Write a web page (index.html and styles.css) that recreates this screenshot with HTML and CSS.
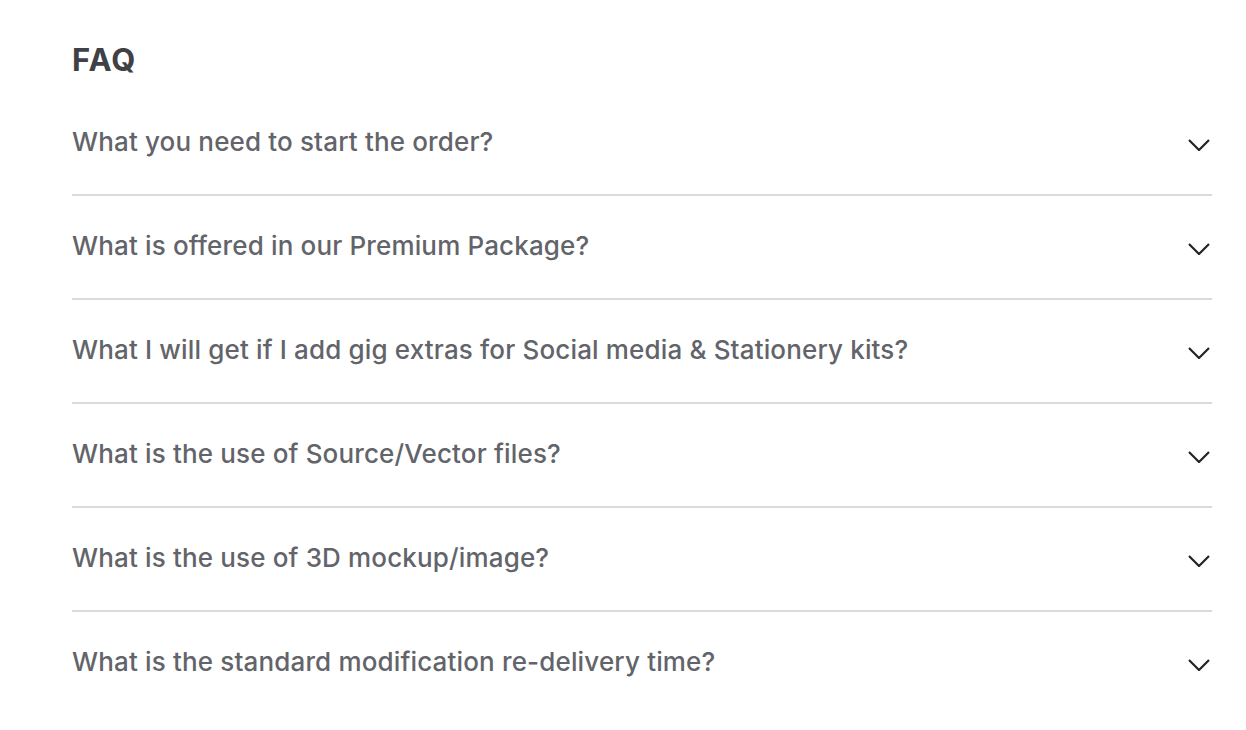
FILE: index.html
```html
<!DOCTYPE html>
<html lang="en">
<head>
<meta charset="utf-8">
<title>FAQ</title>
<link rel="stylesheet" href="styles.css">
</head>
<body>
<section class="faq">
  <h2 class="faq-title">FAQ</h2>
  <ul class="faq-list">
    <li class="faq-item"><span class="faq-q">What you need to start the order?</span><svg class="chev" viewBox="0 0 22 12"><path d="M1 1 L11 11 L21 1"/></svg></li>
    <li class="faq-item"><span class="faq-q">What is offered in our Premium Package?</span><svg class="chev" viewBox="0 0 22 12"><path d="M1 1 L11 11 L21 1"/></svg></li>
    <li class="faq-item"><span class="faq-q">What I will get if I add gig extras for Social media &amp; Stationery kits?</span><svg class="chev" viewBox="0 0 22 12"><path d="M1 1 L11 11 L21 1"/></svg></li>
    <li class="faq-item"><span class="faq-q">What is the use of Source/Vector files?</span><svg class="chev" viewBox="0 0 22 12"><path d="M1 1 L11 11 L21 1"/></svg></li>
    <li class="faq-item"><span class="faq-q">What is the use of 3D mockup/image?</span><svg class="chev" viewBox="0 0 22 12"><path d="M1 1 L11 11 L21 1"/></svg></li>
    <li class="faq-item"><span class="faq-q">What is the standard modification re-delivery time?</span><svg class="chev" viewBox="0 0 22 12"><path d="M1 1 L11 11 L21 1"/></svg></li>
  </ul>
</section>
</body>
</html>
```
FILE: styles.css
```css
html, body {
  margin: 0;
  padding: 0;
  background: #ffffff;
}
body {
  font-family: Inter, "Open Sans", "Liberation Sans", sans-serif;
}
.faq {
  padding: 40px 34px 0 72px;
}
.faq-title {
  margin: 0;
  font-size: 31px;
  line-height: 40px;
  font-weight: 700;
  letter-spacing: 1px;
  color: #404145;
}
.faq-list {
  list-style: none;
  margin: 10px 0 0;
  padding: 0;
}
.faq-item {
  display: flex;
  align-items: center;
  justify-content: space-between;
  height: 102px;
  border-top: 2px solid #dadbdd;
}
.faq-item:first-child {
  border-top: 2px solid transparent;
}
.faq-q {
  font-size: 26px;
  font-weight: 500;
  letter-spacing: 0.15px;
  color: #62646a;
  margin-top: -4px;
}
.chev {
  width: 22px;
  height: 12px;
  margin-right: 2px;
  margin-top: 4px;
  fill: none;
  stroke: #222325;
  stroke-width: 2.2;
}
```
